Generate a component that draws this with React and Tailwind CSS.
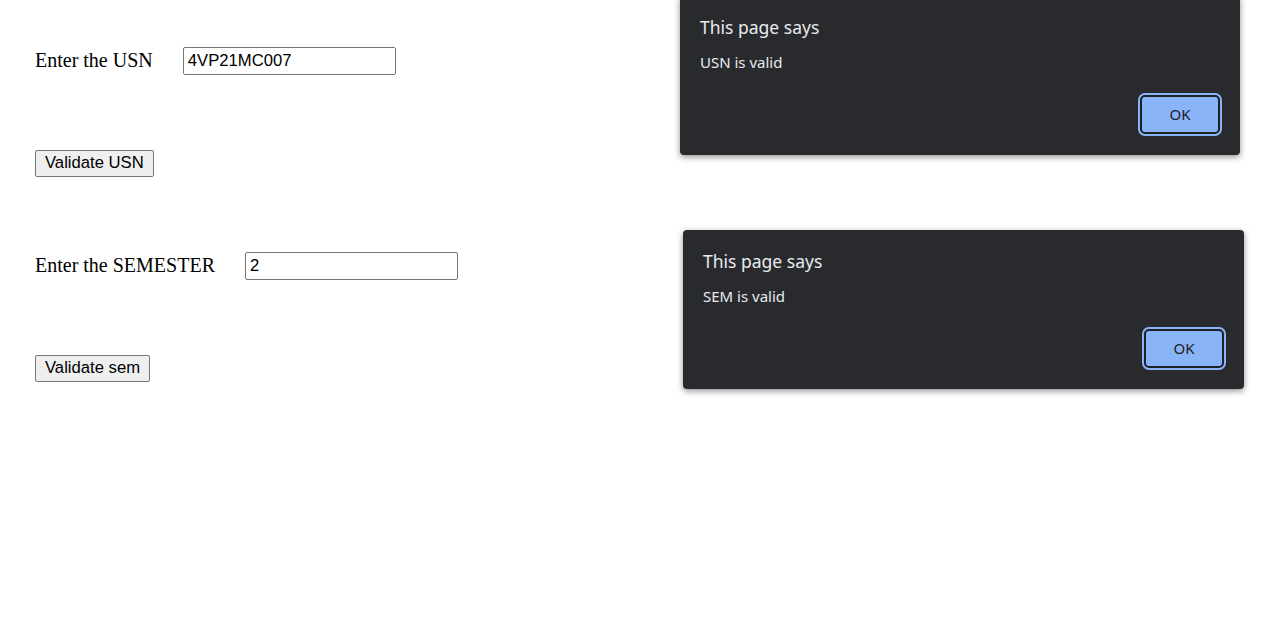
import React from 'react';

function AlertBox({ message, className }) {
  return (
    <div
      className={`absolute w-[561px] h-[159px] bg-[#292a2d] rounded-[4px] shadow-[0_2px_6px_rgba(0,0,0,0.45)] flex flex-col px-[20px] ${className}`}
      style={{ fontFamily: '"Noto Sans", "Open Sans", sans-serif' }}
    >
      <div className="pt-[17px] text-[17.5px] leading-[28px] text-[#e8eaed]">This page says</div>
      <div className="mt-[11px] text-[15px] leading-[20px] text-[#e8eaed]">{message}</div>
      <div className="flex-1 flex items-end justify-end pb-[21px]">
        <button className="w-[80px] h-[39px] rounded-[5px] bg-[#8ab4f8] border-2 border-[#202124] ring-2 ring-[#8ab4f8] text-[15px] text-[#202124]">
          OK
        </button>
      </div>
    </div>
  );
}

function Field({ label, value }) {
  return (
    <div className="flex items-center gap-[30px] h-[28px]">
      <span className="text-[20px] leading-[28px] text-black -mt-[2px]" style={{ fontFamily: '"Liberation Serif", serif' }}>{label}</span>
      <input
        readOnly
        value={value}
        className="w-[213px] h-[28px] border border-[#767676] rounded-[2px] px-[4px] text-[16.67px] text-black outline-none"
        style={{ fontFamily: '"Liberation Sans", Arial, sans-serif' }}
      />
    </div>
  );
}

function ValidateButton({ children }) {
  return (
    <button
      className="h-[27px] px-[9px] bg-[#efefef] border border-[#767676] rounded-[2px] text-[16.67px] text-black leading-none"
      style={{ fontFamily: '"Liberation Sans", Arial, sans-serif' }}
    >
      {children}
    </button>
  );
}

export default function App() {
  return (
    <div className="relative w-[1280px] h-[629px] bg-white overflow-hidden">
      <div className="flex flex-col items-start gap-[75px] pl-[35px] pt-[47px]">
        <Field label="Enter the USN" value="4VP21MC007" />
        <ValidateButton>Validate USN</ValidateButton>
        <Field label="Enter the SEMESTER" value="2" />
        <ValidateButton>Validate sem</ValidateButton>
      </div>

      <AlertBox message="USN is valid" className="left-[680px] top-[-4px] !w-[560px]" />
      <AlertBox message="SEM is valid" className="left-[683px] top-[230px]" />
    </div>
  );
}
